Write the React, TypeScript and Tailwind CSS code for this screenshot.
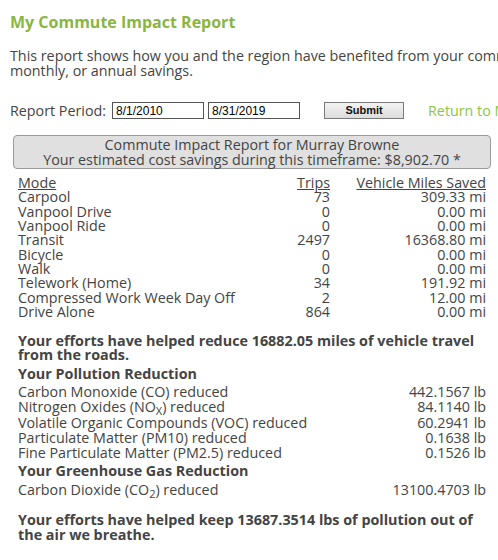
import React from "react";

const modes: [string, string, string][] = [
  ["Carpool", "73", "309.33 mi"],
  ["Vanpool Drive", "0", "0.00 mi"],
  ["Vanpool Ride", "0", "0.00 mi"],
  ["Transit", "2497", "16368.80 mi"],
  ["Bicycle", "0", "0.00 mi"],
  ["Walk", "0", "0.00 mi"],
  ["Telework (Home)", "34", "191.92 mi"],
  ["Compressed Work Week Day Off", "2", "12.00 mi"],
  ["Drive Alone", "864", "0.00 mi"],
];

export default function App() {
  return (
    <div
      className="w-[498px] h-[560px] overflow-hidden bg-white text-[#444444] text-[14.3px]"
      style={{ fontFamily: '"Open Sans", "Noto Sans", sans-serif' }}
    >
      <div className="pl-[10px] pt-[12px]">
        <h1 className="text-[16px] leading-[20px] font-bold text-[#8ab53f]">My Commute Impact Report</h1>
        <p className="mt-[16px] leading-[15px] whitespace-nowrap">
          This report shows how you and the region have benefited from your commute choices, with your daily, weekly,
          <br />
          monthly, or annual savings.
        </p>
        <div className="mt-[24px] flex items-center h-[17px] whitespace-nowrap w-[700px]">
          <span className="leading-[17px] shrink-0">Report Period:</span>
          <input
            defaultValue="8/1/2010"
            className="shrink-0 ml-[6px] w-[92px] h-[17px] border border-[#555] px-[3px] text-[12px] text-black outline-none"
            style={{ fontFamily: '"Liberation Sans", Arial, sans-serif' }}
          />
          <input
            defaultValue="8/31/2019"
            className="shrink-0 ml-[4px] w-[92px] h-[17px] border border-[#555] px-[3px] text-[12px] text-black outline-none"
            style={{ fontFamily: '"Liberation Sans", Arial, sans-serif' }}
          />
          <button
            className="shrink-0 ml-[24px] w-[80px] h-[17px] border border-[#7a7a7a] bg-gradient-to-b from-[#f4f4f4] to-[#dcdcdc] text-[11px] font-bold text-[#111] leading-[15px]"
            style={{ fontFamily: '"Liberation Sans", Arial, sans-serif' }}
          >
            Submit
          </button>
          <span className="shrink-0 ml-[24px] text-[#8cc63f] leading-[17px]">Return to My Commute</span>
        </div>
      </div>

      <div className="ml-[13px] mt-[16px] w-[478px] h-[34px] border border-[#9a9a9a] rounded-[4px] bg-[#e0e0e0] text-center leading-[15px] pt-[1px]">
        <div>Commute Impact Report for Murray Browne</div>
        <div>Your estimated cost savings during this timeframe: $8,902.70 *</div>
      </div>

      <div className="ml-[18px] w-[468px] mt-[7px]">
        <div className="grid grid-cols-[1fr_60px_156px] leading-[14.33px]">
          <div className="underline">Mode</div>
          <div className="text-right underline">Trips</div>
          <div className="text-right underline">Vehicle Miles Saved</div>
          {modes.map(([m, t, v]) => (
            <React.Fragment key={m}>
              <div className="whitespace-nowrap">{m}</div>
              <div className="text-right">{t}</div>
              <div className="text-right">{v}</div>
            </React.Fragment>
          ))}
        </div>

        <p className="mt-[15px] font-bold leading-[14px] text-[14.35px] whitespace-nowrap">
          Your efforts have helped reduce 16882.05 miles of vehicle travel
          <br />
          from the roads.
        </p>
        <div className="mt-[4px] font-bold leading-[15px] text-[14.35px]">Your Pollution Reduction</div>
        <div className="mt-[3px]">
          <div className="flex justify-between h-[15px] leading-[15px]">
            <span>Carbon Monoxide (CO) reduced</span>
            <span>442.1567 lb</span>
          </div>
          <div className="flex justify-between h-[16px] leading-[15px]">
            <span>
              Nitrogen Oxides (NO<sub className="text-[11px] leading-none">X</sub>) reduced
            </span>
            <span>84.1140 lb</span>
          </div>
          <div className="flex justify-between h-[15px] leading-[15px]">
            <span>Volatile Organic Compounds (VOC) reduced</span>
            <span>60.2941 lb</span>
          </div>
          <div className="flex justify-between h-[15px] leading-[15px]">
            <span>Particulate Matter (PM10) reduced</span>
            <span>0.1638 lb</span>
          </div>
          <div className="flex justify-between h-[15px] leading-[15px]">
            <span>Fine Particulate Matter (PM2.5) reduced</span>
            <span>0.1526 lb</span>
          </div>
        </div>
        <div className="mt-[3px] font-bold leading-[15px] text-[14.35px]">Your Greenhouse Gas Reduction</div>
        <div className="mt-[4px] flex justify-between h-[15px] leading-[15px]">
          <span>
            Carbon Dioxide (CO<sub className="text-[11px] leading-none">2</sub>) reduced
          </span>
          <span>13100.4703 lb</span>
        </div>
        <p className="mt-[15px] font-bold leading-[15px] text-[14.35px] whitespace-nowrap">
          Your efforts have helped keep 13687.3514 lbs of pollution out of
          <br />
          the air we breathe.
        </p>
      </div>
    </div>
  );
}
